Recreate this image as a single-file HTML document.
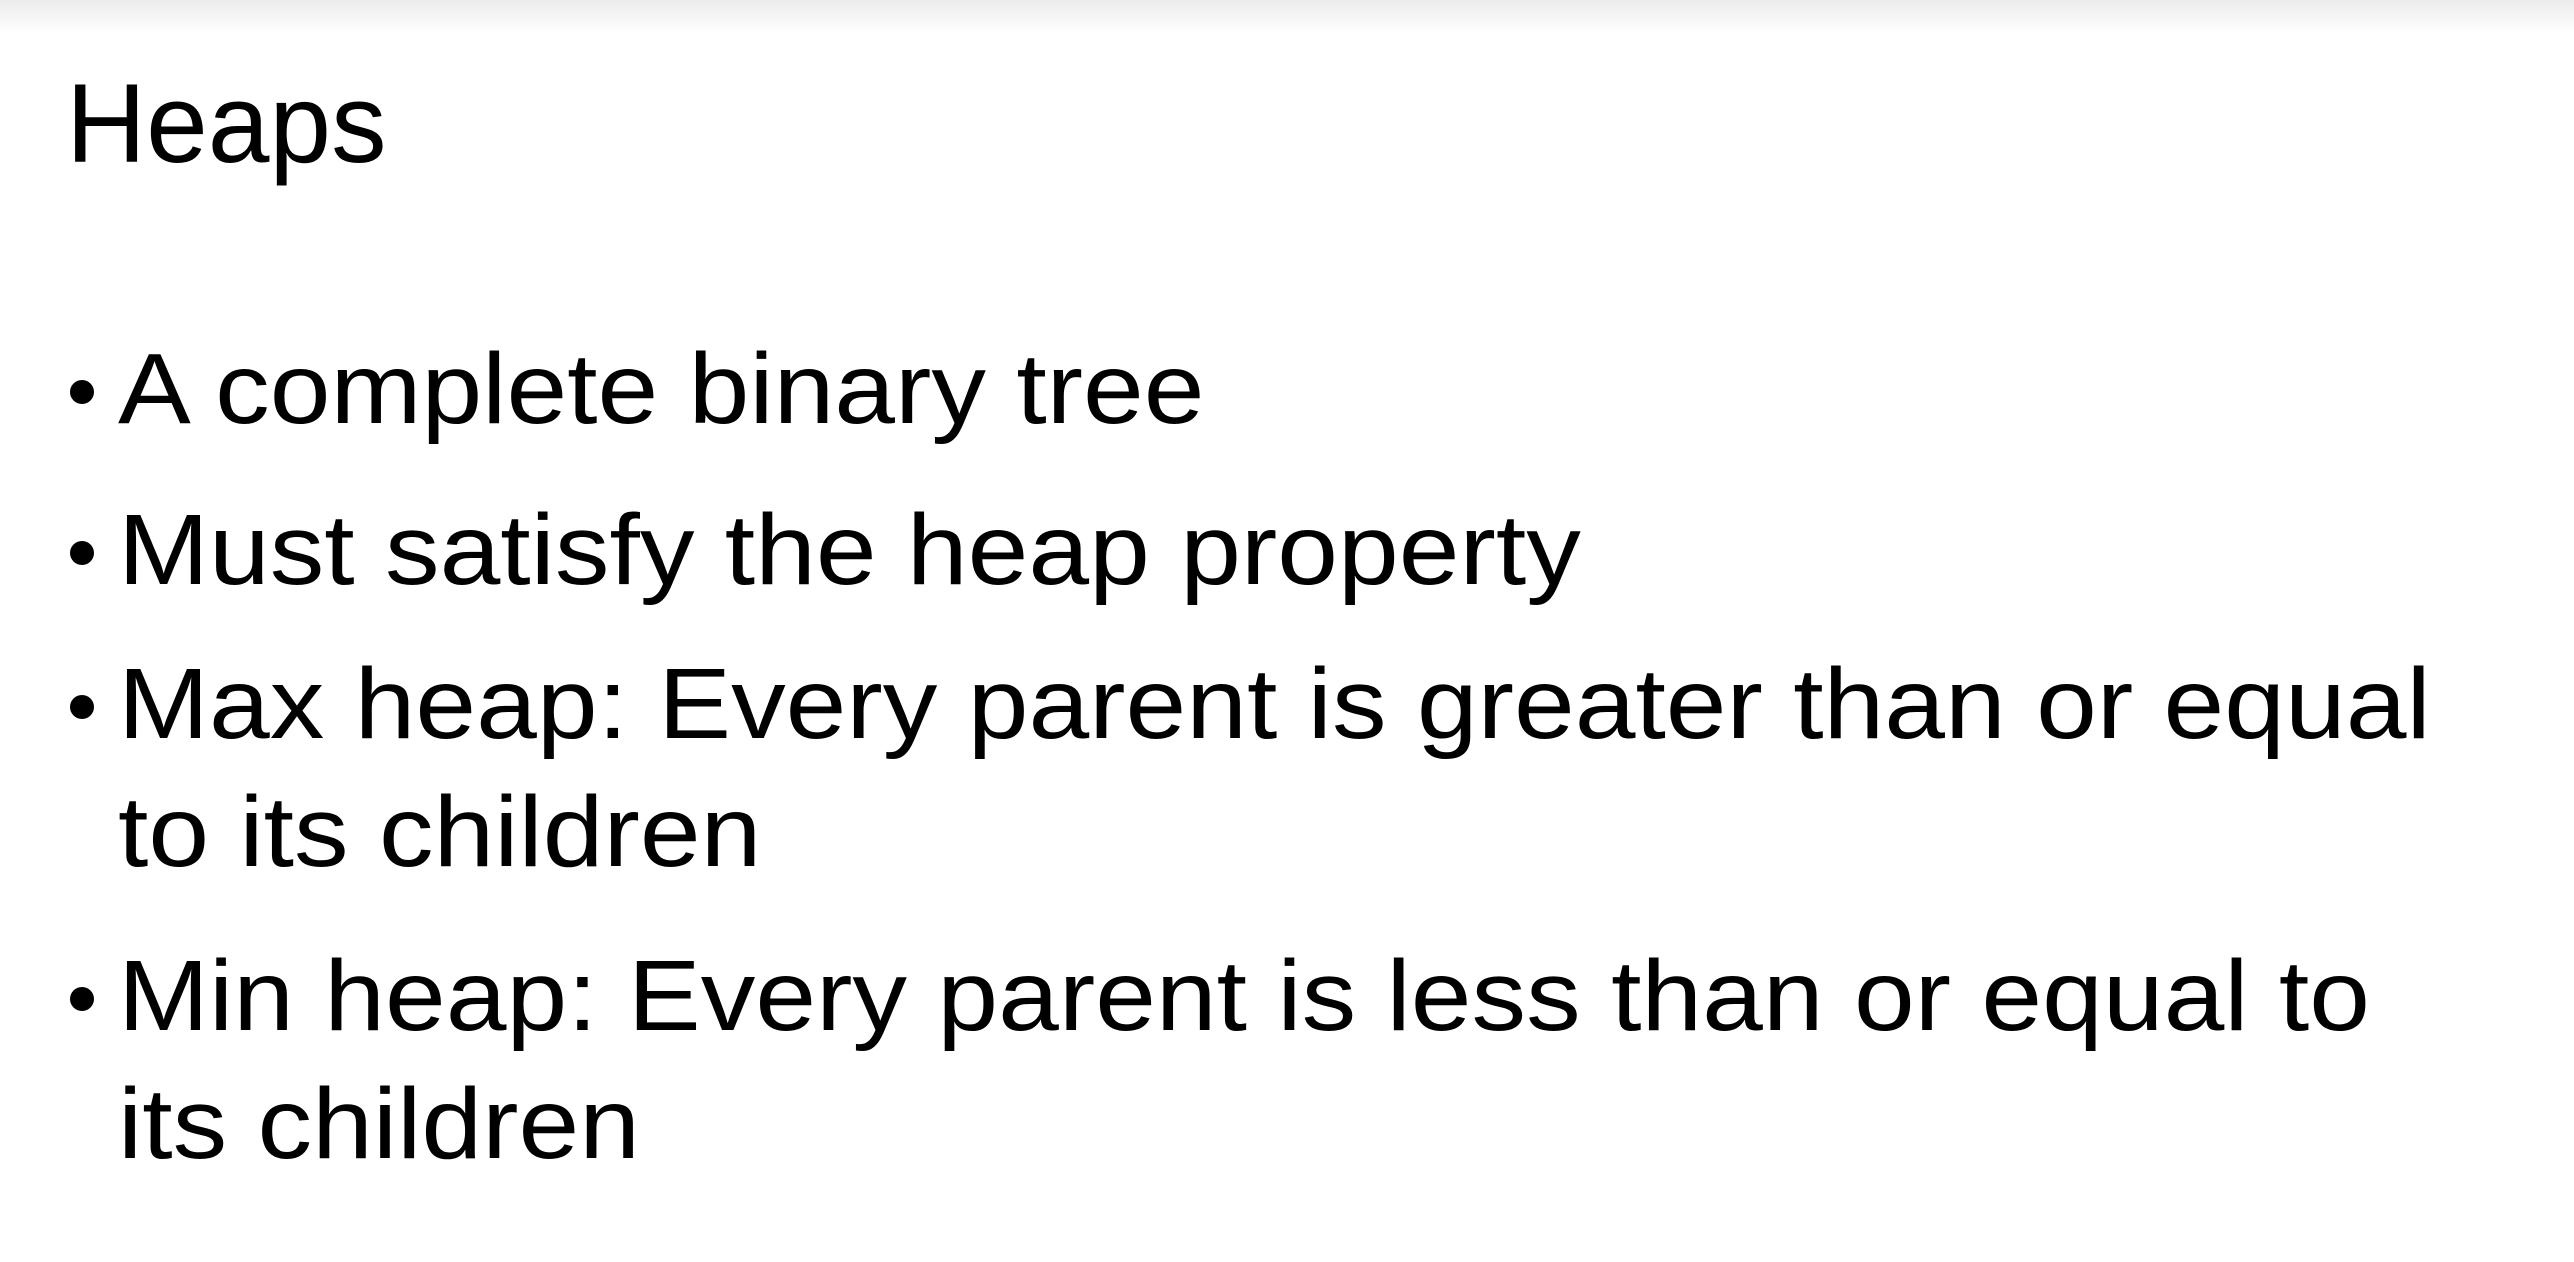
<!DOCTYPE html>
<html><head><meta charset="utf-8"><style>
html,body{margin:0;padding:0;}
body{width:2574px;height:1262px;background:#fff;position:relative;overflow:hidden;font-family:"Liberation Sans",sans-serif;color:#000;}
.top{position:absolute;left:0;top:0;width:2574px;height:34px;background:linear-gradient(#ececec,#fff);}
.t{position:absolute;white-space:nowrap;line-height:1;}
.h{font-size:112px;left:66px;top:68px;transform:scaleX(0.99);transform-origin:left;}
.l{font-size:100px;left:118px;transform:scaleX(1.092);transform-origin:left;}
.b{position:absolute;width:24px;height:24px;border-radius:50%;background:#000;left:70px;}
</style></head><body>
<div class="top"></div>
<div class="t h">Heaps</div>
<div class="b" style="top:380px"></div><div class="t l" style="top:339px">A complete binary tree</div>
<div class="b" style="top:541px"></div><div class="t l" style="top:500px">Must satisfy the heap property</div>
<div class="b" style="top:695px"></div><div class="t l" style="top:654px">Max heap: Every parent is greater than or equal</div>
<div class="t l" style="top:782px">to its children</div>
<div class="b" style="top:987px"></div><div class="t l" style="top:946px">Min heap: Every parent is less than or equal to</div>
<div class="t l" style="top:1074px">its children</div>
</body></html>
